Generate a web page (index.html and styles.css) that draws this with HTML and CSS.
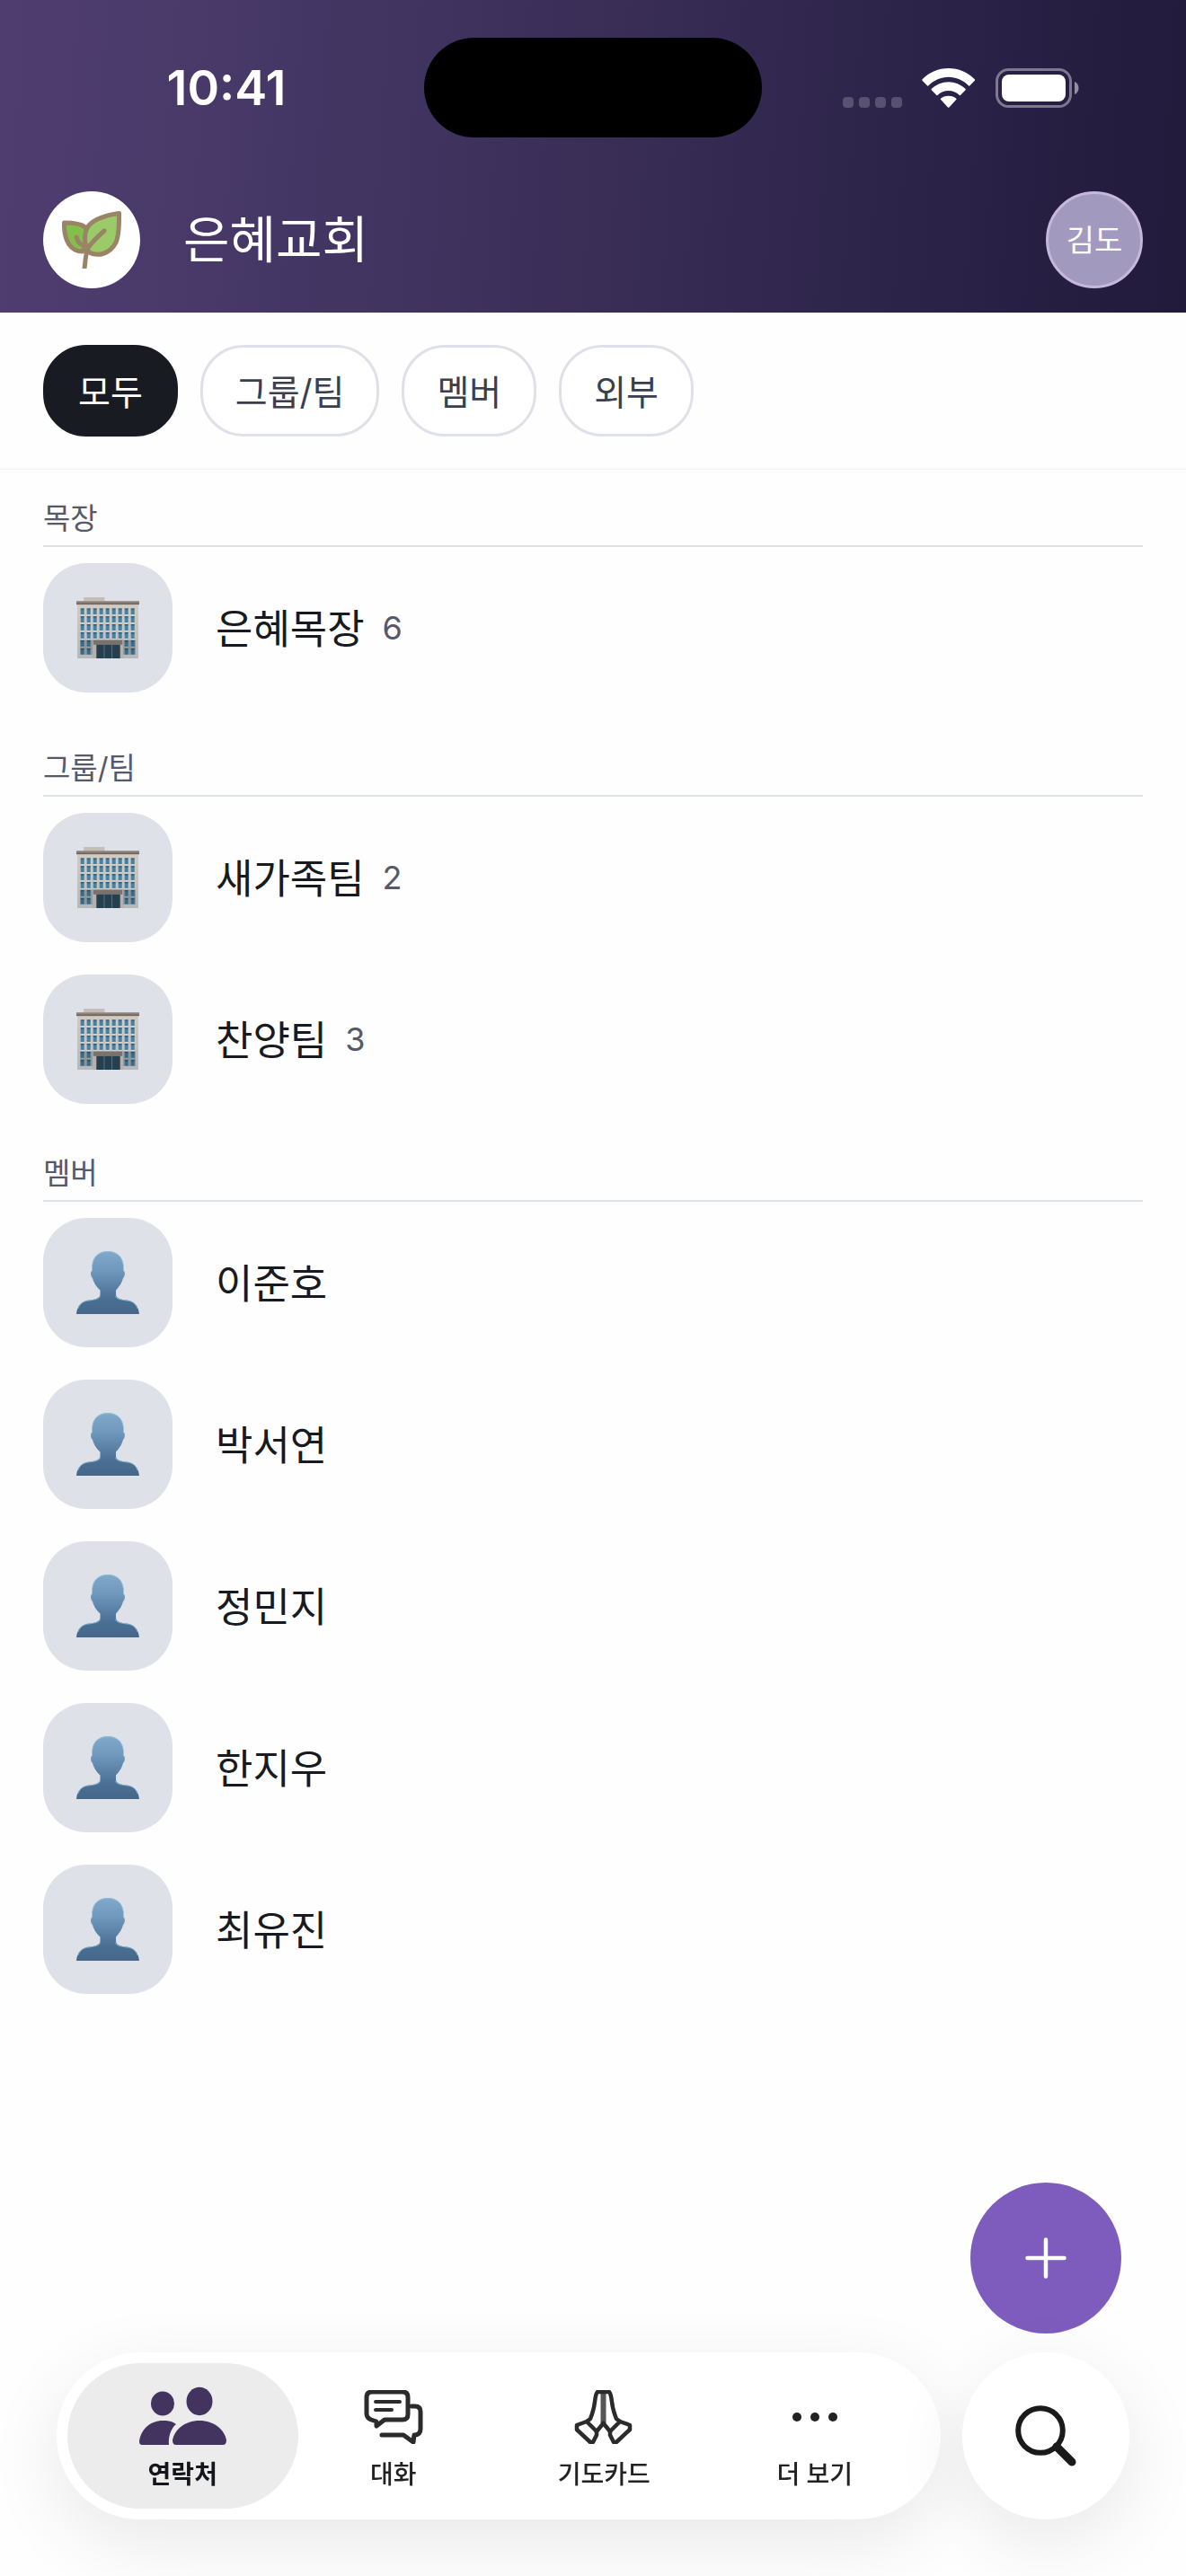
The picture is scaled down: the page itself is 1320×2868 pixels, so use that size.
FILE: index.html
```html
<!DOCTYPE html>
<html lang="ko">
<head>
    <meta charset="UTF-8">
    <meta name="viewport" content="width=device-width, initial-scale=1.0">
    <title>은혜교회</title>
    <link rel="stylesheet" href="styles.css">
</head>
<body>
    <!-- Shared icons -->
    <svg class="sprite" aria-hidden="true">
        <defs>
            <linearGradient id="person-fill" x1="0" y1="0" x2="0" y2="1">
                <stop offset="0" stop-color="#7fa8cb"/>
                <stop offset="0.3" stop-color="#7099bd"/>
                <stop offset="0.75" stop-color="#4b6f95"/>
                <stop offset="1" stop-color="#456688"/>
            </linearGradient>
            <linearGradient id="wall-fill" x1="0" y1="0" x2="0" y2="1">
                <stop offset="0" stop-color="#d2cbc1"/>
                <stop offset="1" stop-color="#b4b8ba"/>
            </linearGradient>
            <linearGradient id="roof-fill" x1="0" y1="0" x2="0" y2="1">
                <stop offset="0" stop-color="#a3978f"/>
                <stop offset="1" stop-color="#675c58"/>
            </linearGradient>
            <linearGradient id="glass-fill" x1="0" y1="0" x2="0" y2="1">
                <stop offset="0" stop-color="#28536f"/>
                <stop offset="0.4" stop-color="#4a83a6"/>
                <stop offset="1" stop-color="#437b9d"/>
            </linearGradient>
            <pattern id="windows" x="4" y="12" width="6.9" height="8.8" patternUnits="userSpaceOnUse">
                <rect width="5.2" height="7.4" fill="#e4e2de"/>
                <rect x="0.5" width="4.2" height="6.8" fill="url(#glass-fill)"/>
            </pattern>
        </defs>
        <symbol id="icon-building" viewBox="0 0 69 68">
            <rect x="8" y="0" width="23" height="5" fill="#c4beb8"/>
            <rect x="1" y="7" width="67" height="61" fill="url(#wall-fill)"/>
            <rect x="0" y="4" width="69" height="4" fill="url(#roof-fill)"/>
            <rect x="4" y="12" width="61" height="51" fill="url(#windows)"/>
            <rect x="4" y="47" width="61" height="16" fill="#183446" opacity="0.3"/>
            <path d="M17.500 46.500H51.500V68H17.500z" fill="#b5b0ad"/>
            <rect x="18.500" y="47" width="32" height="5" fill="#7a706c"/>
            <rect x="22" y="52" width="26" height="15.500" fill="#26404f"/>
            <path d="M30.500 52v15M39 52v15" stroke="#557180" stroke-width="1"/>
            <path d="M1 67.500H68" stroke="#a4a5a6"/>
        </symbol>
        <symbol id="icon-person" viewBox="0 0 70 70">
            <path d="M35 0C46 0 52 7 52.500 16L52.500 22C54.500 22 54.500 28 52 30C50 37 47 40 44 43.500V49C45 53 50 54 56 54.500C64 55.500 69 60 70 70H0C1 60 6 55.500 14 54.500C20 54 25 53 26.500 49V43.500C23 40 20 37 18 30C15.500 28 15.500 22 17.500 22L17.500 16C18 7 24 0 35 0Z" fill="url(#person-fill)"/>
            <path d="M18 15C19 6 25 .700 35 .700S51 6 52 15M2 64C4 58 8 55.500 14 55C20 54 25 53.500 27 50M68 64C66 58 62 55.500 56 55C50 54 45 53.500 43 50" fill="none" stroke="#8fcbe2" stroke-width="1" opacity="0.7"/>
        </symbol>
    </svg>

    <header class="header">
        <div class="status-bar">
            <span class="status-time">10:41</span>
            <span class="island"></span>
            <div class="status-icons">
                <svg class="signal" viewBox="0 0 66 44" aria-hidden="true">
                    <g fill="#fff" opacity="0.2">
                        <rect x="0" y="32" width="12" height="12" rx="4"/>
                        <rect x="18" y="32" width="12" height="12" rx="4"/>
                        <rect x="36" y="32" width="12" height="12" rx="4"/>
                        <rect x="54" y="32" width="12" height="12" rx="4"/>
                    </g>
                </svg>
                <svg class="wifi" viewBox="0 0 58 43" aria-hidden="true">
                    <g fill="#fff">
                        <path d="M29 0C40 0 50 4.500 57.500 12Q58 13 57.500 13.500L52 19Q51.500 19.500 51 19C45 13 37 9.500 29 9.500S13 13 7 19Q6.500 19.500 6 19L.500 13.500Q0 13 .500 12C8 4.500 18 0 29 0Z"/>
                        <path d="M29 15C36 15 42.500 18 47.500 22.500Q48 23 47.500 23.700L42 29.300Q41.500 29.700 41 29.300C37.500 26 33.500 24.500 29 24.500S20.500 26 17 29.300Q16.500 29.700 16 29.300L10.500 23.700Q10 23 10.500 22.500C15.500 18 22 15 29 15Z"/>
                        <path d="M29 30C32.500 30 35.500 31.200 37.500 33Q38 33.500 37.500 34L29.700 42.400Q29 43 28.300 42.400L20.500 34Q20 33.500 20.500 33C22.500 31.200 25.500 30 29 30Z"/>
                    </g>
                </svg>
                <svg class="battery" viewBox="0 0 94 44" aria-hidden="true">
                    <rect x="1.500" y="1.500" width="82" height="41" rx="13" fill="none" stroke="#fff" stroke-width="3" opacity="0.4"/>
                    <rect x="7" y="7" width="71" height="30" rx="8" fill="#fff"/>
                    <path d="M88 15C94 17 94 27 88 29Z" fill="#fff" opacity="0.5"/>
                </svg>
            </div>
        </div>
        <div class="title-bar">
            <div class="church-logo">
                <svg viewBox="0 0 66 64" aria-hidden="true">
                    <g stroke="#998467" stroke-width="5" stroke-linejoin="round">
                        <path d="M2.500 13C12 13 21 14 26 18C30 26 28 36 23 45C10 45 2 34 2.500 13Z" fill="#84bf4c"/>
                        <path d="M63.500 2.500C44 5 30 12 27 21C24 30 26 40 30 46C40 51 53 48 60 35C64 26 63.500 14 63.500 2.500Z" fill="#9bca69"/>
                    </g>
                    <path d="M47 22C39 29 31 37 28 43Q26 52 25 64M16 29L18 34Q21 38 27 39" fill="none" stroke="#998467" stroke-width="5" stroke-linecap="round"/>
                </svg>
            </div>
            <h1>은혜교회</h1>
            <button type="button" class="profile">김도</button>
        </div>
    </header>

    <div class="filters">
        <button type="button" class="chip active">모두</button>
        <button type="button" class="chip">그룹/팀</button>
        <button type="button" class="chip">멤버</button>
        <button type="button" class="chip">외부</button>
    </div>

    <main class="contacts">
        <section>
            <h2>목장</h2>
            <ul class="contact-list">
                <li>
                    <span class="avatar"><svg viewBox="0 0 69 68" aria-hidden="true"><use href="#icon-building"/></svg></span>
                    <span class="name">은혜목장</span>
                    <span class="count">6</span>
                </li>
            </ul>
        </section>

        <section>
            <h2>그룹/팀</h2>
            <ul class="contact-list">
                <li>
                    <span class="avatar"><svg viewBox="0 0 69 68" aria-hidden="true"><use href="#icon-building"/></svg></span>
                    <span class="name">새가족팀</span>
                    <span class="count">2</span>
                </li>
                <li>
                    <span class="avatar"><svg viewBox="0 0 69 68" aria-hidden="true"><use href="#icon-building"/></svg></span>
                    <span class="name">찬양팀</span>
                    <span class="count">3</span>
                </li>
            </ul>
        </section>

        <section>
            <h2>멤버</h2>
            <ul class="contact-list">
                <li>
                    <span class="avatar"><svg viewBox="0 0 70 70" aria-hidden="true"><use href="#icon-person"/></svg></span>
                    <span class="name">이준호</span>
                </li>
                <li>
                    <span class="avatar"><svg viewBox="0 0 70 70" aria-hidden="true"><use href="#icon-person"/></svg></span>
                    <span class="name">박서연</span>
                </li>
                <li>
                    <span class="avatar"><svg viewBox="0 0 70 70" aria-hidden="true"><use href="#icon-person"/></svg></span>
                    <span class="name">정민지</span>
                </li>
                <li>
                    <span class="avatar"><svg viewBox="0 0 70 70" aria-hidden="true"><use href="#icon-person"/></svg></span>
                    <span class="name">한지우</span>
                </li>
                <li>
                    <span class="avatar"><svg viewBox="0 0 70 70" aria-hidden="true"><use href="#icon-person"/></svg></span>
                    <span class="name">최유진</span>
                </li>
            </ul>
        </section>
    </main>

    <div class="bottom">
        <button type="button" class="fab" aria-label="추가">
            <svg viewBox="0 0 46 46" aria-hidden="true">
                <path d="M23 2.500V43.500M2.500 23H43.500" stroke="#fff" stroke-width="4.500" stroke-linecap="round"/>
            </svg>
        </button>
        <div class="bottom-row">
            <nav class="tabs">
                <a href="#contacts" class="tab active">
                    <svg class="people" viewBox="0 0 97 66" aria-hidden="true">
                        <g fill="#42345f">
                            <ellipse cx="26" cy="19" rx="13" ry="13.500"/>
                            <ellipse cx="67" cy="16.500" rx="14.500" ry="15.700"/>
                            <path d="M26 38C33 38 38 39 41 42C35 47 32 56 33 65H3Q0 65 0 61C2 47 13 38 26 38Z"/>
                            <path d="M67 38C83 38 95 48 97 60Q97 65 93 65H41Q37 65 37 60C39 48 51 38 67 38Z"/>
                        </g>
                    </svg>
                    <span>연락처</span>
                </a>
                <a href="#chat" class="tab">
                    <svg class="chat" viewBox="0 0 66 60" aria-hidden="true">
                        <g fill="none" stroke="#2b2b2b" stroke-width="5" stroke-linejoin="round" stroke-linecap="round">
                            <path d="M9 2H43Q49 2 49 8V27Q49 33 43 33H23L14 40V35L8 33Q3 31 3 26V8Q3 2 9 2Z"/>
                            <path d="M13 13H40M13 22H31" stroke-width="4"/>
                            <path d="M53 18H57Q63 18 63 24V43Q63 50 56 50L55 58L44 50H20"/>
                        </g>
                    </svg>
                    <span>대화</span>
                </a>
                <a href="#prayer" class="tab">
                    <svg class="pray" viewBox="0 0 66 60" aria-hidden="true">
                        <path d="M32.500 2V37" stroke="#555" stroke-width="6"/>
                        <g fill="none" stroke="#2b2b2b" stroke-width="4.500" stroke-linejoin="round" stroke-linecap="round">
                            <path d="M32.500 2H26Q24 4 23 13Q22 22 18 32L14 35L25 46L32.500 37"/>
                            <path d="M32.500 2H39Q41 4 42 13Q43 22 47 32L51 35L40 46L32.500 37"/>
                            <path d="M14 35L3 39V44L18 58H21L25 50V46"/>
                            <path d="M51 35L62 39V44L47 58H44L40 50V46"/>
                        </g>
                    </svg>
                    <span>기도카드</span>
                </a>
                <a href="#more" class="tab">
                    <svg class="more" viewBox="0 0 66 60" aria-hidden="true">
                        <g fill="#222">
                            <circle cx="13" cy="30" r="5"/>
                            <circle cx="33" cy="30" r="5"/>
                            <circle cx="53" cy="30" r="5"/>
                        </g>
                    </svg>
                    <span>더 보기</span>
                </a>
            </nav>
            <button type="button" class="search" aria-label="검색">
                <svg viewBox="0 0 68 68" aria-hidden="true">
                    <circle cx="28" cy="28" r="24.800" fill="none" stroke="#1a1a1a" stroke-width="6"/>
                    <path d="M46 46L63 63" stroke="#1a1a1a" stroke-width="9" stroke-linecap="round"/>
                </svg>
            </button>
        </div>
    </div>
</body>
</html>
```

FILE: styles.css
```css
* {
    box-sizing: border-box;
}

body {
    margin: 0;
    min-height: 100vh;
    background: #fefefe;
    color: #171a21;
    font-family: Inter, "Noto Sans CJK KR", sans-serif;
}

button {
    font-family: inherit;
    cursor: pointer;
}

svg {
    display: block;
}

.sprite {
    position: absolute;
    width: 0;
    height: 0;
}

/* Header */
.header {
    background: linear-gradient(94deg, #503d70, #493a6a 15%, #3a2e57 50%, #2a2247 80%, #221a3b);
    color: #fff;
    padding-bottom: 27px;
}

.status-bar {
    display: grid;
    grid-template-columns: 1fr 376px 1fr;
    align-items: center;
    padding-top: 42px;
}

.status-time {
    padding-left: 32px;
    text-align: center;
    font-size: 54px;
    font-weight: 600;
    line-height: 64px;
}

.island {
    height: 111px;
    border-radius: 56px;
    background: #000;
}

.status-icons {
    display: flex;
    justify-content: center;
    gap: 22px;
    padding-left: 88px;
    padding-right: 116px;
}

.status-icons svg {
    height: 44px;
    flex: none;
}

.title-bar {
    display: flex;
    align-items: center;
    padding: 0 48px;
    margin-top: 60px;
}

.church-logo {
    display: flex;
    align-items: center;
    justify-content: center;
    width: 108px;
    height: 108px;
    border-radius: 50%;
    background: #fff;
}

.church-logo svg {
    width: 66px;
}

h1 {
    flex: 1;
    margin: 0 48px;
    font-size: 56px;
    font-weight: 400;
    line-height: 80px;
}

.profile {
    width: 108px;
    height: 108px;
    padding: 0 0 4px;
    border: 3px solid #c6b8da;
    border-radius: 50%;
    background: #a299bf;
    color: #fff;
    font-size: 34px;
}

/* Filter chips */
.filters {
    display: flex;
    gap: 25px;
    padding: 36px 48px;
    border-bottom: 1px solid #f1f2f4;
}

.chip {
    height: 102px;
    padding: 0 36px 3px;
    border: 3px solid #dfe1e9;
    border-radius: 48px;
    background: #fff;
    color: #3a3f4e;
    font-size: 39px;
}

.chip.active {
    border-color: #181b22;
    background: #181b22;
    color: #fff;
}

/* Contacts */
.contacts {
    padding: 0 48px 320px;
}

h2 {
    margin: 0;
    padding: 30px 0 6px;
    border-bottom: 2px solid #dfe1e9;
    color: #565969;
    font-size: 33px;
    font-weight: 400;
    line-height: 48px;
}

.contact-list {
    display: flex;
    flex-direction: column;
    gap: 36px;
    min-height: 192px;
    margin: 0;
    padding: 18px 0 23px;
    list-style: none;
}

.contact-list li {
    display: flex;
    align-items: center;
}

.avatar {
    display: flex;
    align-items: center;
    justify-content: center;
    width: 144px;
    height: 144px;
    margin-right: 48px;
    border-radius: 48px;
    background: #dfe1e9;
}

.avatar svg {
    width: 70px;
}

.name {
    padding-bottom: 3px;
    font-size: 45px;
}

.count {
    margin-left: 20px;
    color: #565969;
    font-size: 36px;
}

/* Bottom bar */
.bottom {
    position: fixed;
    left: 63px;
    right: 63px;
    bottom: 63px;
    display: flex;
    flex-direction: column;
    align-items: flex-end;
    gap: 21px;
}

.fab {
    display: flex;
    align-items: center;
    justify-content: center;
    width: 168px;
    height: 168px;
    margin-right: 9px;
    border: none;
    border-radius: 50%;
    background: #7d5cbd;
}

.fab svg {
    width: 46px;
}

.bottom-row {
    display: flex;
    gap: 24px;
    width: 100%;
}

.tabs,
.search {
    height: 186px;
    border-radius: 93px;
    background: #fff;
    box-shadow: 0 24px 84px rgba(0, 0, 0, 0.09);
}

.tabs {
    display: flex;
    flex: 1;
    padding: 12px;
}

.tab {
    display: flex;
    flex: 1;
    flex-direction: column;
    align-items: center;
    padding-top: 26px;
    border-radius: 81px;
    color: #222;
    font-size: 28px;
    font-weight: 500;
    text-decoration: none;
}

/* neighbouring tabs overlap a little so the active pill stays wide */
.tab + .tab {
    margin-left: -22px;
}

.tab.active {
    background: #ececec;
    color: #14161c;
    font-weight: 600;
}

.tab svg {
    height: 66px;
}

.tab .chat,
.tab .pray,
.tab .more {
    height: 60px;
    margin: 4px 0 2px;
}

.tab span {
    margin-top: 12px;
    line-height: 40px;
}

.search {
    display: flex;
    align-items: center;
    justify-content: center;
    width: 186px;
    padding: 0;
    border: none;
}

.search svg {
    width: 68px;
}
```
